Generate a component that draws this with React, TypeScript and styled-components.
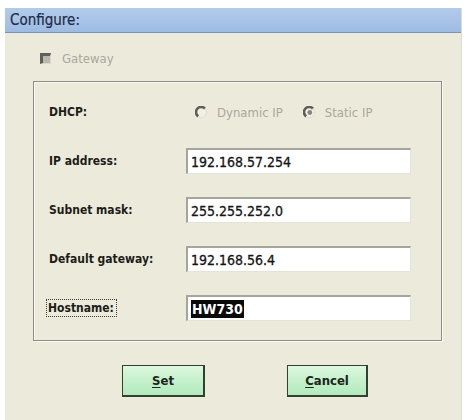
import React from "react";
import styled, { createGlobalStyle } from "styled-components";

const Global = createGlobalStyle`
  html, body { margin: 0; padding: 0; background: #ffffff; }
  body { font-family: "DejaVu Sans Condensed", "DejaVu Sans", sans-serif; }
`;

const Window = styled.div`
  margin: 8px 0 0 5px;
  width: 457px;
  height: 412px;
  background: #ecebdb;
  display: flex;
  flex-direction: column;
  box-sizing: border-box;
  border-right: 1px solid #dedcd0;
`;

const TitleBar = styled.div`
  height: 25px;
  box-sizing: border-box;
  background: linear-gradient(180deg, #b2cbe9 0%, #a6c2e6 60%, #9dbbe2 100%);
  border-bottom: 1px solid #7c93b4;
  display: flex;
  align-items: center;
  padding-left: 5px;
  font-size: 15px;
  color: #1d2b48;
  -webkit-text-stroke: 0.2px #1d2b48;
`;

const Body = styled.div`
  display: flex;
  flex-direction: column;
  padding: 18px 20px 0 28px;
`;

const CheckRow = styled.div`
  display: flex;
  align-items: center;
  gap: 11px;
  padding-left: 7px;
  height: 15px;
  font-size: 13px;
  color: #a9a79e;
`;

const CheckBox = styled.span`
  width: 11px;
  height: 11px;
  box-sizing: border-box;
  border-top: 3px solid #5f5f5a;
  border-left: 3px solid #5f5f5a;
  border-right: 1px solid #d9d8cc;
  border-bottom: 1px solid #d9d8cc;
  background: #b9b8ae;
`;

const Group = styled.div`
  margin-top: 15px;
  width: 409px;
  box-sizing: border-box;
  border: 1px solid #8e8d85;
  box-shadow: inset 1px 1px 0 #fbfaf2, 1px 1px 0 #fbfaf2;
  padding: 17px 12px 19px 12px;
  display: grid;
  grid-template-columns: 140px 225px;
  grid-auto-rows: 26px;
  row-gap: 23px;
  align-items: center;
`;

const Label = styled.span<{ $focus?: boolean }>`
  justify-self: start;
  font-size: 12px;
  font-weight: bold;
  color: #1c1c18;
  padding: 1px 2px 1px 1px;
  margin-left: ${(p) => (p.$focus ? "0" : "1px")};
  border: 1px dotted ${(p) => (p.$focus ? "#3a3a36" : "transparent")};
`;

const RadioGroup = styled.div`
  display: flex;
  align-items: center;
  padding-left: 9px;
  gap: 20px;
  font-size: 13px;
  color: #a9a79e;
`;

const RadioItem = styled.span`
  display: flex;
  align-items: center;
  gap: 9px;
`;

const Input = styled.div`
  height: 26px;
  box-sizing: border-box;
  border-top: 2px solid #a6a59c;
  border-left: 2px solid #a6a59c;
  border-right: 1px solid #e4e3d8;
  border-bottom: 1px solid #e4e3d8;
  background: #ffffff;
  display: flex;
  align-items: center;
  padding-left: 3px;
  font-size: 14px;
  color: #151515;
  -webkit-text-stroke: 0.3px #151515;
`;

const Selected = styled.span`
  background: #0a0a0a;
  color: #ffffff;
  -webkit-text-stroke: 0;
  padding: 1px 1px;
  font-weight: bold;
`;

const ButtonRow = styled.div`
  display: flex;
  gap: 82px;
  margin-top: 24px;
  padding-left: 89px;
`;

const Button = styled.button<{ $w: number }>`
  width: ${(p) => p.$w}px;
  height: 32px;
  box-sizing: border-box;
  border: 1px solid #34402f;
  border-right-width: 2px;
  border-bottom-width: 2px;
  background: linear-gradient(180deg, #ddf8df 0%, #c3f0ca 55%, #b3eabd 100%);
  font-family: "DejaVu Sans Condensed", "DejaVu Sans", sans-serif;
  font-size: 13px;
  font-weight: bold;
  color: #1c241c;
  padding: 0;
  display: flex;
  align-items: center;
  justify-content: center;
  u { text-decoration: underline; text-underline-offset: 2px; }
`;

const Radio = ({ checked }: { checked?: boolean }) => (
  <svg width="13" height="13" viewBox="0 0 13 13">
    <circle cx="6.5" cy="6.5" r="5.2" fill="#f1f0e6" />
    <path d="M10 2.6 A5.2 5.2 0 1 0 3.2 10.4" fill="none" stroke="#5e5d58" strokeWidth="2.6" />
    <path d="M3.2 10.4 A5.2 5.2 0 0 0 10 2.6" fill="none" stroke="#dedcd2" strokeWidth="1" />
    {checked && <circle cx="6.8" cy="6.5" r="2.4" fill="#85847d" />}
  </svg>
);

export default function App() {
  return (
    <>
      <Global />
      <Window>
        <TitleBar>Configure:</TitleBar>
        <Body>
          <CheckRow>
            <CheckBox />
            Gateway
          </CheckRow>
          <Group>
            <Label>DHCP:</Label>
            <RadioGroup>
              <RadioItem>
                <Radio />
                Dynamic IP
              </RadioItem>
              <RadioItem>
                <Radio checked />
                Static IP
              </RadioItem>
            </RadioGroup>
            <Label>IP address:</Label>
            <Input>192.168.57.254</Input>
            <Label>Subnet mask:</Label>
            <Input>255.255.252.0</Input>
            <Label>Default gateway:</Label>
            <Input>192.168.56.4</Input>
            <Label $focus>Hostname:</Label>
            <Input>
              <Selected>HW730</Selected>
            </Input>
          </Group>
          <ButtonRow>
            <Button $w={83}>
              <u>S</u>et
            </Button>
            <Button $w={81}>
              <u>C</u>ancel
            </Button>
          </ButtonRow>
        </Body>
      </Window>
    </>
  );
}
